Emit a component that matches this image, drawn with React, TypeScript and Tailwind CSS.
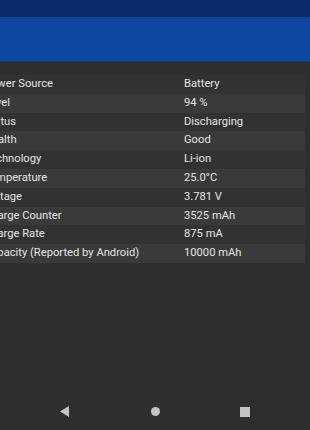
const rows = [
  ["Power Source", "Battery"],
  ["Level", "94 %"],
  ["Status", "Discharging"],
  ["Health", "Good"],
  ["Technology", "Li-ion"],
  ["Temperature", "25.0°C"],
  ["Voltage", "3.781 V"],
  ["Charge Counter", "3525 mAh"],
  ["Charge Rate", "875 mA"],
  ["Capacity (Reported by Android)", "10000 mAh"],
];

export default function App() {
  return (
    <div className="w-[310px] h-[430px] overflow-hidden bg-[#2e2e2e] flex flex-col font-['Roboto',sans-serif]">
      <div className="h-[17px] bg-[#0a2b69]"></div>
      <div className="h-[45px] bg-[#0d47a1] border-b border-[#123a66]"></div>

      <div className="mt-[13px] w-[305px] flex flex-col">
        {rows.map((row, index) => (
          <div
            key={index}
            className={
              "h-[18.8px] flex items-center text-[11.2px] text-[#e4e4e4] whitespace-nowrap " +
              (index % 2 === 1 ? "bg-[#3a3a3a]" : "bg-[#323232]")
            }
          >
            <div className="w-[200px] shrink-0 -ml-[16px]">{row[0]}</div>
            <div>{row[1]}</div>
          </div>
        ))}
      </div>

      <div className="flex-1"></div>

      <div className="h-[35px] mb-[1px] flex items-center justify-between px-[60px]">
        <svg width="10" height="11" viewBox="0 0 10 11">
          <polygon points="9,0 9,11 0,5.5" fill="#c4c4c4" />
        </svg>
        <div className="w-[9px] h-[9px] rounded-full bg-[#c4c4c4]"></div>
        <div className="w-[10px] h-[10px] bg-[#c4c4c4]"></div>
      </div>
    </div>
  );
}
